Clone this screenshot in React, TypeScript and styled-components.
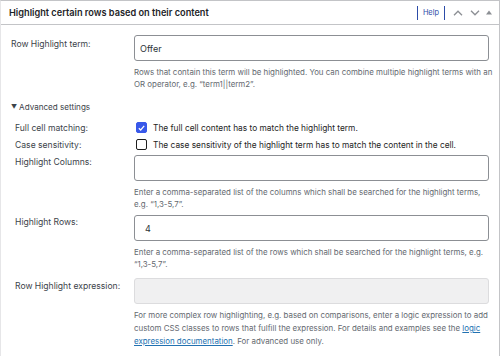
import React from "react";
import styled, { createGlobalStyle } from "styled-components";

const GlobalStyle = createGlobalStyle`
  html, body { margin: 0; padding: 0; background: #ffffff; }
  body { font-family: Inter, "Noto Sans", sans-serif; color: #1d2327; }
  * { box-sizing: border-box; }
`;

const Postbox = styled.section`
  width: 500px;
  height: 356px;
  overflow: hidden;
  border-top: 1px solid #c3c4c7;
  border-right: 1px solid #c3c4c7;
  border-left: 1px solid #e6e6e8;
  background: #fff;
`;

const Header = styled.div`
  height: 24px;
  display: flex;
  align-items: center;
  justify-content: space-between;
  border-bottom: 1px solid #c3c4c7;
  padding: 0 6px 0 8px;
`;

const Title = styled.h2`
  margin: 0;
  font-size: 9.2px;
  font-weight: 600;
  color: #1d2327;
`;

const Actions = styled.div`
  display: flex;
  align-items: center;
`;

const HelpButton = styled.span`
  display: flex;
  align-items: center;
  height: 14px;
  padding: 0 5px;
  border-left: 1px solid #2c4ca8;
  border-right: 1px solid #2c4ca8;
  font-size: 7.4px;
  color: #2c4ca8;
  margin-right: 8px;
`;

const IconBtn = styled.span<{ $mr: number }>`
  display: flex;
  align-items: center;
  justify-content: center;
  height: 16px;
  margin-right: ${(p) => p.$mr}px;
  color: #8c8f94;
`;

const Body = styled.div`
  padding: 10px 10px 0 10px;
`;

const FormRow = styled.div<{ $indent?: boolean; $mb: number; $mt?: number }>`
  display: grid;
  grid-template-columns: 123px minmax(0, 1fr);
  align-items: start;
  margin-top: ${(p) => p.$mt ?? 0}px;
  margin-bottom: ${(p) => p.$mb}px;
  & > label {
    padding-left: ${(p) => (p.$indent ? 4 : 0)}px;
  }
`;

const Label = styled.label<{ $pt: number }>`
  font-size: 8.6px;
  line-height: 12px;
  color: #3c434a;
  padding-top: ${(p) => p.$pt}px;
`;

const Field = styled.div`
  display: flex;
  flex-direction: column;
  min-width: 0;
`;

const TextInput = styled.div<{ $disabled?: boolean; $pl?: number }>`
  height: 26px;
  border: 1px solid ${(p) => (p.$disabled ? "#dcdcde" : "#8c8f94")};
  background: ${(p) => (p.$disabled ? "#f0f0f1" : "#fff")};
  border-radius: 3px;
  display: flex;
  align-items: center;
  padding-left: ${(p) => p.$pl ?? 5}px;
  font-size: 9px;
  color: #2c3338;
`;

const Desc = styled.p<{ $lh: number }>`
  margin: 5px 0 0 0;
  font-size: 7.9px;
  line-height: ${(p) => p.$lh}px;
  color: #646970;
  white-space: nowrap;
`;

const Link = styled.a`
  color: #2271b1;
  text-decoration: underline;
`;

const Summary = styled.div`
  margin: 11px 0 6px 0;
  font-size: 8.1px;
  line-height: 12px;
  color: #3c434a;
  display: flex;
  align-items: center;
  gap: 2px;
`;

const Caret = styled.span`
  font-size: 6px;
  color: #3c434a;
`;

const CheckRow = styled.div`
  display: grid;
  grid-template-columns: 123px minmax(0, 1fr);
  align-items: center;
  height: 17px;
  & > label {
    padding-left: 4px;
  }
`;

const CheckField = styled.div`
  display: flex;
  align-items: center;
  gap: 6px;
  padding-left: 2px;
  font-size: 8.35px;
  color: #1e1e1e;
`;

const Box = styled.span<{ $checked?: boolean }>`
  width: 11px;
  height: 11px;
  border-radius: 2px;
  border: 1px solid ${(p) => (p.$checked ? "#3858e9" : "#1e1e1e")};
  background: ${(p) => (p.$checked ? "#3858e9" : "#fff")};
  display: flex;
  align-items: center;
  justify-content: center;
  flex-shrink: 0;
`;

const Chevron = ({ up }: { up?: boolean }) => (
  <svg width="10" height="6" viewBox="0 0 10 6">
    <path
      d={up ? "M1 5.2 L5 1.2 L9 5.2" : "M1 0.8 L5 4.8 L9 0.8"}
      fill="none"
      stroke="currentColor"
      strokeWidth="1.3"
    />
  </svg>
);

export default function App() {
  return (
    <>
      <GlobalStyle />
      <Postbox>
        <Header>
          <Title>Highlight certain rows based on their content</Title>
          <Actions>
            <HelpButton>Help</HelpButton>
            <IconBtn $mr={7}>
              <Chevron up />
            </IconBtn>
            <IconBtn $mr={6}>
              <Chevron />
            </IconBtn>
            <IconBtn $mr={1}>
              <svg width="6" height="5" viewBox="0 0 6 5">
                <path d="M0 4.5 L3 0.5 L6 4.5 Z" fill="currentColor" />
              </svg>
            </IconBtn>
          </Actions>
        </Header>
        <Body>
          <FormRow $mb={0}>
            <Label $pt={3}>Row Highlight term:</Label>
            <Field>
              <TextInput>Offer</TextInput>
              <Desc $lh={12}>
                Rows that contain this term will be highlighted. You can combine multiple highlight terms with an
                <br />
                OR operator, e.g. “term1||term2”.
              </Desc>
            </Field>
          </FormRow>
          <Summary>
            <Caret>▼</Caret>Advanced settings
          </Summary>
          <CheckRow>
            <Label $pt={0}>Full cell matching:</Label>
            <CheckField>
              <Box $checked>
                <svg width="7" height="6" viewBox="0 0 7 6">
                  <path d="M0.8 3.2 L2.7 5 L6.2 0.8" fill="none" stroke="#fff" strokeWidth="1.2" />
                </svg>
              </Box>
              The full cell content has to match the highlight term.
            </CheckField>
          </CheckRow>
          <CheckRow>
            <Label $pt={0}>Case sensitivity:</Label>
            <CheckField>
              <Box />
              The case sensitivity of the highlight term has to match the content in the cell.
            </CheckField>
          </CheckRow>
          <FormRow $indent $mb={5} $mt={2}>
            <Label $pt={1}>Highlight Columns:</Label>
            <Field>
              <TextInput />
              <Desc $lh={12}>
                Enter a comma-separated list of the columns which shall be searched for the highlight terms,
                <br />
                e.g. “1,3-5,7”.
              </Desc>
            </Field>
          </FormRow>
          <FormRow $indent $mb={8}>
            <Label $pt={1}>Highlight Rows:</Label>
            <Field>
              <TextInput $pl={10}>4</TextInput>
              <Desc $lh={12}>
                Enter a comma-separated list of the rows which shall be searched for the highlight terms, e.g.
                <br />
                “1,3-5,7”.
              </Desc>
            </Field>
          </FormRow>
          <FormRow $indent $mb={0}>
            <Label $pt={2}>Row Highlight expression:</Label>
            <Field>
              <TextInput $disabled />
              <Desc $lh={13}>
                For more complex row highlighting, e.g. based on comparisons, enter a logic expression to add
                <br />
                custom CSS classes to rows that fulfill the expression. For details and examples see the{" "}
                <Link href="#">logic</Link>
                <br />
                <Link href="#">expression documentation</Link>. For advanced use only.
              </Desc>
            </Field>
          </FormRow>
        </Body>
      </Postbox>
    </>
  );
}
